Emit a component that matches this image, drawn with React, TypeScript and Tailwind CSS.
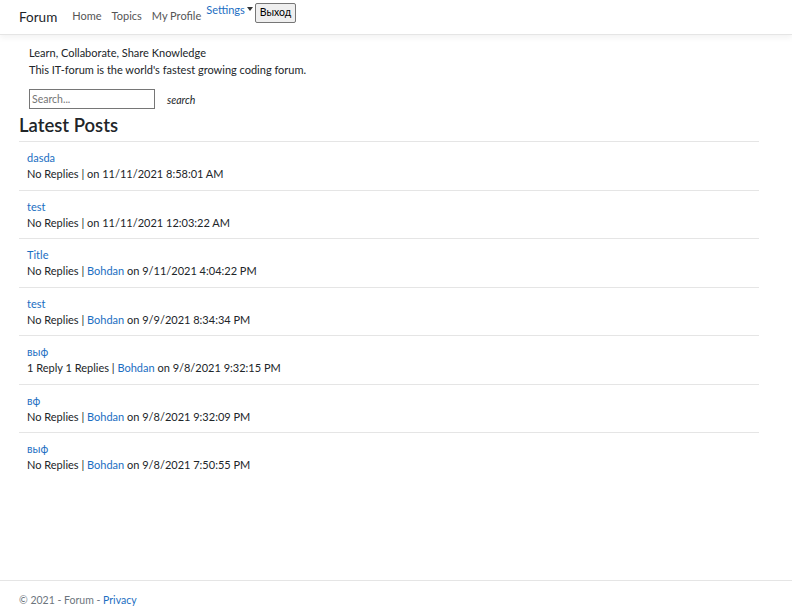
import React from 'react';

const posts = [
  { title: 'dasda', replies: 'No Replies', author: '', date: '11/11/2021 8:58:01 AM' },
  { title: 'test', replies: 'No Replies', author: '', date: '11/11/2021 12:03:22 AM' },
  { title: 'Title', replies: 'No Replies', author: 'Bohdan', date: '9/11/2021 4:04:22 PM' },
  { title: 'test', replies: 'No Replies', author: 'Bohdan', date: '9/9/2021 8:34:34 PM' },
  { title: 'выф', replies: '1 Reply 1 Replies', author: 'Bohdan', date: '9/8/2021 9:32:15 PM' },
  { title: 'вф', replies: 'No Replies', author: 'Bohdan', date: '9/8/2021 9:32:09 PM' },
  { title: 'выф', replies: 'No Replies', author: 'Bohdan', date: '9/8/2021 7:50:55 PM' },
];

const App = () => {
  return (
    <div className="flex flex-col h-[612px] bg-white text-[#212529] font-['Lato',sans-serif] text-[11px]">
      {/* navbar */}
      <nav className="h-[35px] border-b border-[#e5e5e5] shadow-[0_3px_6px_rgba(0,0,0,0.05)] flex items-start pl-[19px]">
        <a className="text-[13.5px] mt-[7px] text-[#212529]">Forum</a>
        <div className="flex items-start ml-[15px] mt-[8px] text-[11px] text-[#555]">
          <a className="mr-[10px]">Home</a>
          <a className="mr-[10px]">Topics</a>
          <a>My Profile</a>
        </div>
        <a className="ml-[5px] mt-[2px] text-[11px] text-[#1b6ec2] flex items-center">
          Settings
          <span className="ml-[2px] mb-[3px] border-x-[3px] border-x-transparent border-t-[4px] border-t-[#333]" />
        </a>
        <button className="ml-[2px] mt-[3px] h-[20px] px-[4px] text-[10.5px] bg-[#efefef] border border-[#767676] rounded-[2px] text-black">
          Выход
        </button>
      </nav>

      <main className="flex-1 pl-[19px] pr-[33px]">
        <div className="pl-[10px] pt-[9px] leading-[17px] text-[11px]">
          <p>Learn, Collaborate, Share Knowledge</p>
          <p>This IT-forum is the world's fastest growing coding forum.</p>
        </div>
        <div className="flex items-center pl-[10px] mt-[11px]">
          <input
            placeholder="Search..."
            className="w-[126px] h-[20px] border border-[#767676] px-[2px] text-[10.5px] placeholder:text-[#757575]"
          />
          <span className="ml-[12px] mt-[3px] italic text-[10.5px]">search</span>
        </div>
        <h2 className="text-[18.5px] font-semibold leading-[22px] mt-[5px] pb-[5px] border-b border-[#e5e5e5]">Latest Posts</h2>
        {posts.map((p, i) => (
          <div key={i} className="pl-[8px] pt-[8px] h-[48.5px] border-b border-[#e5e5e5] last:border-b-0 leading-[16px]">
            <a className="block text-[#1b6ec2]">{p.title}</a>
            <div>
              {p.replies} | {p.author && <a className="text-[#1b6ec2]">{p.author}</a>}
              {p.author && ' '}on {p.date}
            </div>
          </div>
        ))}
      </main>

      <footer className="h-[32px] border-t border-[#e5e5e5] pl-[19px] pt-[12px] text-[10.5px] text-[#6c757d]">
        © 2021 - Forum - <a className="text-[#1b6ec2]">Privacy</a>
      </footer>
    </div>
  );
};

export default App;
